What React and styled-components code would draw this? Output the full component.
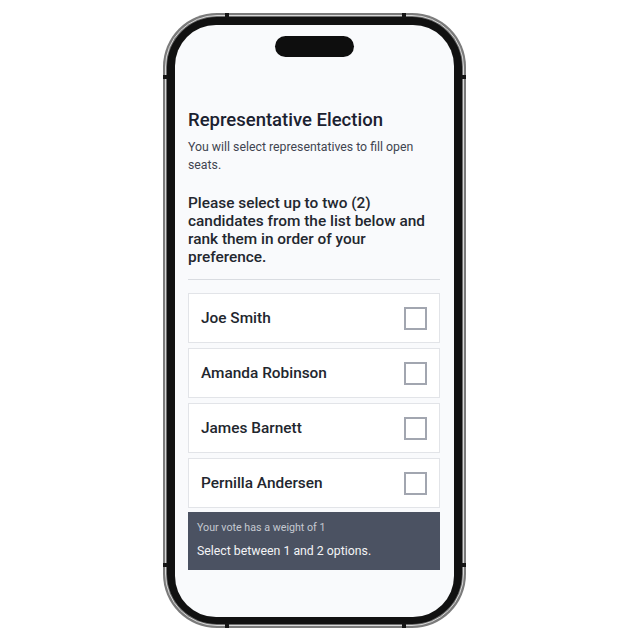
import React from "react";
import styled, { createGlobalStyle } from "styled-components";

const Global = createGlobalStyle`
  html, body { margin: 0; padding: 0; background: #ffffff; }
  body { font-family: Roboto, "Noto Sans", Arial, sans-serif; }
  * { box-sizing: border-box; }
`;

const Page = styled.div`
  width: 630px;
  height: 640px;
  padding: 13px 0 0 163px;
  display: flex;
  align-items: flex-start;
`;

const Phone = styled.div`
  position: relative;
  width: 303px;
  height: 615px;
  border-radius: 54px;
  background: #7b7b7b;
  padding: 2px;
`;

const Rim = styled.div`
  height: 100%;
  border-radius: 52px;
  border: 1px solid #d9d9d9;
  background: #6f6f6f;
  padding: 1px;
`;

const Bezel = styled.div`
  height: 100%;
  border-radius: 50px;
  background: #111111;
  padding: 8px 8px 7px 8px;
`;

const Screen = styled.div`
  height: 100%;
  border-radius: 41px;
  background: #f9fafc;
  padding: 11px 14px 0 13px;
  display: flex;
  flex-direction: column;
  overflow: hidden;
`;

const Mark = styled.span`
  position: absolute;
  background: #151515;
  width: ${(p) => (p.$side ? "5px" : "4px")};
  height: ${(p) => (p.$side ? "4px" : "5px")};
  left: ${(p) => p.$x}px;
  top: ${(p) => p.$y}px;
`;

const Island = styled.div`
  align-self: center;
  width: 79px;
  height: 21px;
  border-radius: 11px;
  background: #0e0e0e;
  margin-left: 1px;
  flex-shrink: 0;
`;

const Title = styled.h1`
  margin: 51px 0 0;
  font-size: 18.5px;
  line-height: 24px;
  font-weight: 500;
  color: #1b2130;
`;

const Sub = styled.p`
  margin: 6px 0 0;
  font-size: 12.3px;
  line-height: 18px;
  font-weight: 400;
  color: #3f4450;
`;

const Question = styled.p`
  margin: 20px 0 0;
  font-size: 15.4px;
  line-height: 18px;
  font-weight: 500;
  color: #23272f;
`;

const Divider = styled.hr`
  margin: 13px 0 0;
  border: 0;
  height: 1px;
  background: #d9dce1;
`;

const List = styled.div`
  margin-top: 13px;
  display: flex;
  flex-direction: column;
  gap: 5px;
`;

const Card = styled.label`
  height: 50px;
  background: #ffffff;
  border: 1px solid #e2e4e8;
  display: flex;
  align-items: center;
  justify-content: space-between;
  padding: 0 12px 0 12px;
  font-size: 15.4px;
  font-weight: 500;
  color: #22262e;
`;

const Box = styled.span`
  width: 23px;
  height: 23px;
  border: 2px solid #a2a6b0;
  background: #ffffff;
`;

const Footer = styled.div`
  margin-top: 4px;
  background: #4b5262;
  padding: 8px 9px 10px;
  display: flex;
  flex-direction: column;
  gap: 6px;
`;

const Weight = styled.div`
  font-size: 10.7px;
  line-height: 16px;
  color: #c5c9d1;
`;

const Hint = styled.div`
  font-size: 12.3px;
  line-height: 18px;
  color: #f3f4f6;
`;

const candidates = ["Joe Smith", "Amanda Robinson", "James Barnett", "Pernilla Andersen"];

const marks = [
  { x: 62, y: 0 },
  { x: 239, y: 0 },
  { x: 62, y: 610 },
  { x: 239, y: 610 },
  { x: 0, y: 62, side: true },
  { x: 298, y: 62, side: true },
  { x: 0, y: 550, side: true },
  { x: 298, y: 550, side: true },
];

export default function App() {
  return (
    <>
      <Global />
      <Page>
        <Phone>
          <Rim>
            <Bezel>
              <Screen>
                <Island />
                <Title>Representative Election</Title>
                <Sub>You will select representatives to fill open seats.</Sub>
                <Question>
                  Please select up to two (2) candidates from the list below and rank them in order of your
                  preference.
                </Question>
                <Divider />
                <List>
                  {candidates.map((c) => (
                    <Card key={c}>
                      {c}
                      <Box />
                    </Card>
                  ))}
                </List>
                <Footer>
                  <Weight>Your vote has a weight of 1</Weight>
                  <Hint>Select between 1 and 2 options.</Hint>
                </Footer>
              </Screen>
            </Bezel>
          </Rim>
          {marks.map((m, i) => (
            <Mark key={i} $x={m.x} $y={m.y} $side={m.side} />
          ))}
        </Phone>
      </Page>
    </>
  );
}
